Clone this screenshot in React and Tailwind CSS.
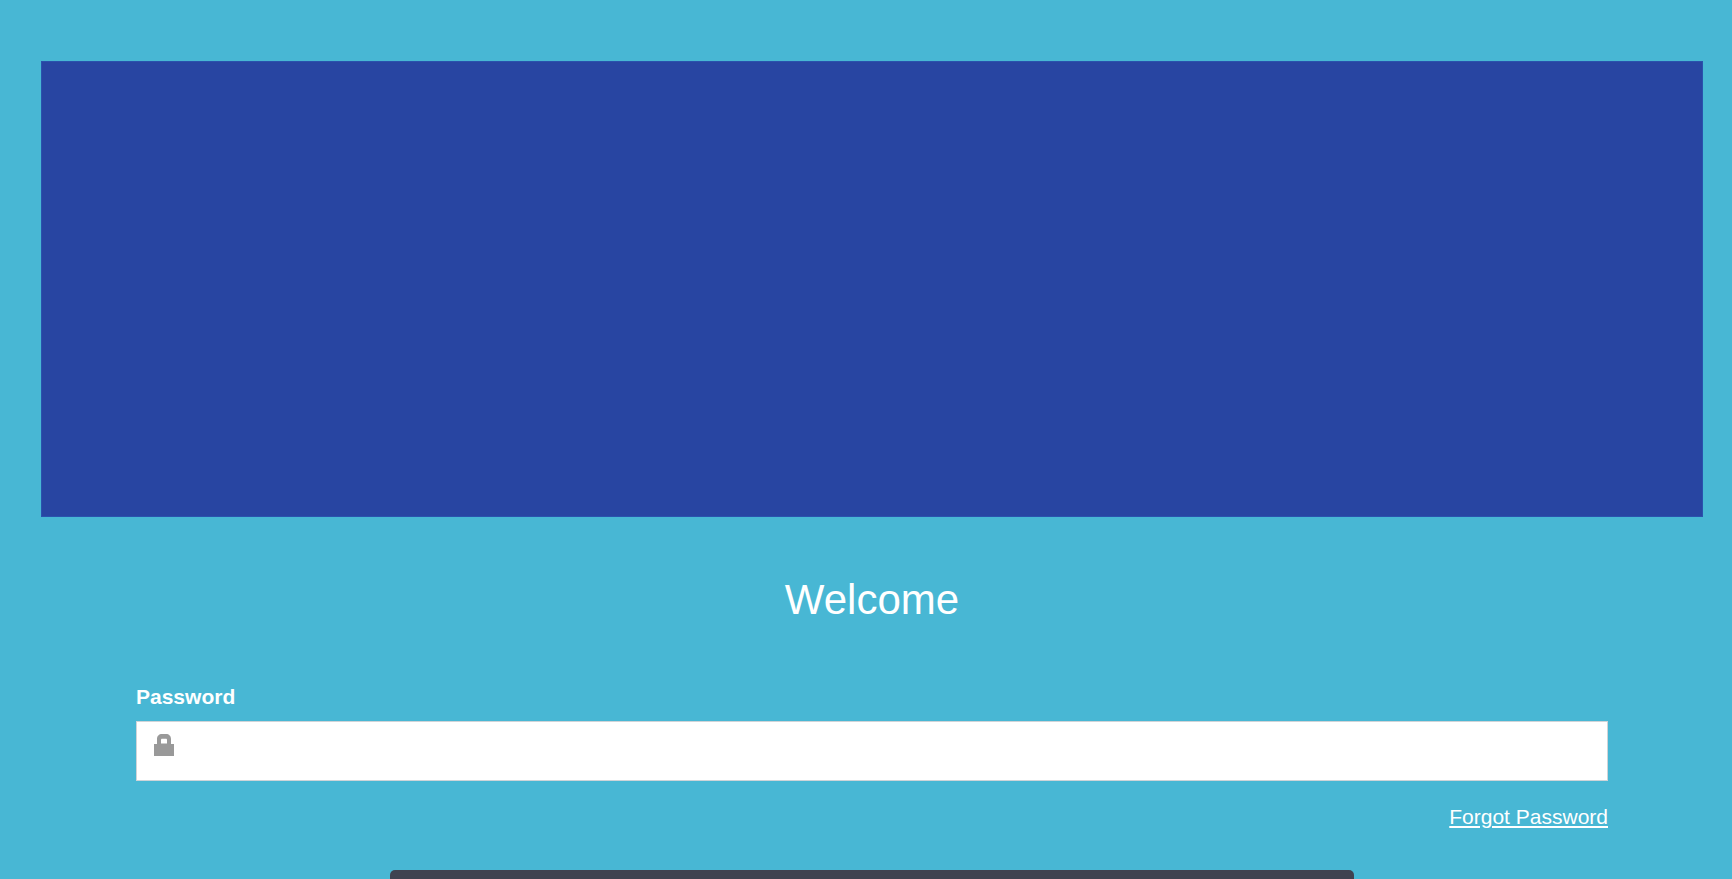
export default function App() {
  return (
    <div className="h-screen overflow-hidden bg-[#48b7d4] pl-[41px] pt-[61px] text-white font-['Liberation_Sans',Arial,sans-serif]">
      <div className="w-[1662px]">
        <div className="h-[456px] bg-[#2845a2] border border-[#2a52ad]" />

        <h1 className="mt-[59px] text-center text-[42px] leading-[48px] font-normal">Welcome</h1>

        <form className="mx-[95px] mt-[61px]">
          <label className="block text-[21px] leading-[24px] font-bold">Password</label>
          <div className="relative mt-[12px]">
            <svg viewBox="0 0 20 22" className="absolute left-[18px] top-[13px] w-[20px] h-[22px] text-[#999999]">
              <path
                fill="currentColor"
                fillRule="evenodd"
                d="M0 10h3V5c0-3 2-5 5-5h4c3 0 5 2 5 5v5h3v12H0V10zM7 9.500h6V6c0-.8-.4-1.300-1.200-1.300H8.200C7.400 4.700 7 5.200 7 6v3.500z"
              />
            </svg>
            <input type="password" className="block w-full h-[60px] bg-white border border-[#cfd4d8] pl-[50px] outline-none" />
          </div>
          <div className="mt-[24px] text-right text-[21px] leading-[24px]">
            <a href="#" className="underline">Forgot Password</a>
          </div>
          <button type="button" className="block mx-auto mt-[41px] w-[964px] h-[60px] bg-[#404250] rounded-[5px]" />
        </form>
      </div>
    </div>
  )
}
